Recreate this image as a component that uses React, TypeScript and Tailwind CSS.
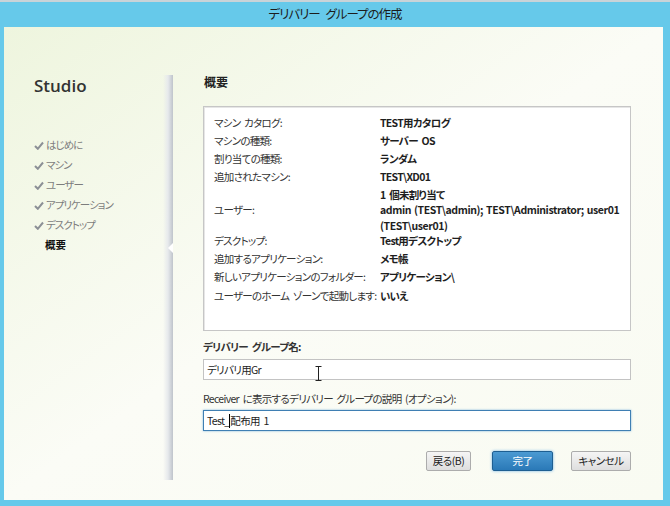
import React from "react";

const font = { fontFamily: '"Noto Sans CJK JP", "Noto Sans", sans-serif' };

function Check() {
  return (
    <svg width="10" height="9" viewBox="0 0 10 9" className="shrink-0">
      <path d="M1 5 L3.8 7.8 L9 1.5" fill="none" stroke="#8c9096" strokeWidth="2" />
    </svg>
  );
}

function Row({ label, children, className = "" }: { label: string; children: React.ReactNode; className?: string }) {
  return (
    <div className={"flex leading-[16px] whitespace-nowrap " + className}>
      <div className="w-[166px] shrink-0 text-[#333]">{label}</div>
      <div className="font-semibold text-[#1e1e1e]">{children}</div>
    </div>
  );
}

export default function App() {
  const done = ["はじめに", "マシン", "ユーザー", "アプリケーション", "デスクトップ"];
  return (
    <div className="w-[670px] h-[506px] bg-[#66c9ea] flex flex-col overflow-hidden [font-feature-settings:'palt'] [word-spacing:2px]" style={font}>
      <div className="h-[2px] bg-[#c9d3d8] shrink-0" />
      <div className="h-[25px] shrink-0 flex items-center justify-center text-[12.5px] tracking-[-1px] text-[#1c1c1c] [word-spacing:4px]">
        デリバリー グループの作成
      </div>
      <div className="flex-1 ml-[4px] mr-[7px] mb-[6px] flex bg-gradient-to-br from-[#eef5de] via-[#fbfcf6] to-[#f9fbf2]">
        {/* sidebar */}
        <div className="w-[159px] shrink-0 flex flex-col pl-[30px] pt-[48px]">
          <div className="text-[17px] font-semibold text-[#333] leading-[22px]" style={{ fontFamily: '"Open Sans", "Noto Sans", sans-serif' }}>
            Studio
          </div>
          <div className="mt-[38px] flex flex-col text-[10.5px] tracking-[-1px]">
            {done.map((t) => (
              <div key={t} className="h-[20px] flex items-center gap-[1px] text-[#7d7d7d]">
                <Check />
                <span className="ml-[1px]">{t}</span>
              </div>
            ))}
            <div className="h-[20px] flex items-center pl-[11px] font-bold text-[#111] tracking-normal">概要</div>
          </div>
        </div>
        {/* shadow divider */}
        <div className="w-[10px] shrink-0 flex flex-col">
          <div className="h-[48px]" />
          <div className="relative flex-1 mb-[20px] bg-gradient-to-r from-[#ffffff00] via-[#e6e9ec] to-[#bfc4cb]">
            <div className="absolute right-0 top-[168px] w-0 h-0 border-y-[5px] border-y-transparent border-r-[5px] border-r-white" />
          </div>
        </div>
        {/* main */}
        <div className="flex-1 min-w-0 pl-[30px] pr-[32px] pt-[47px] text-[10.5px] tracking-[-0.7px] relative">
          <div className="font-semibold text-[12px] leading-[16px] text-[#222] pl-[1px] tracking-normal">概要</div>
          <div className="mt-[16px] h-[225px] bg-white border border-[#c6c6c6] shadow-[inset_1px_1px_0_#e6e6e6] pl-[10px] pt-[8px]">
            <Row label="マシン カタログ:">TEST用カタログ</Row>
            <Row label="マシンの種類:" className="mt-[2px]">サーバー OS</Row>
            <Row label="割り当ての種類:" className="mt-[2px]">ランダム</Row>
            <Row label="追加されたマシン:" className="mt-[2px]">
              <div>TEST\XD01</div>
              <div className="mt-[2px]">1 個未割り当て</div>
            </Row>
            <Row label="ユーザー:" className="mt-[-1px]">
              <div className="tracking-[-0.4px] [word-spacing:1px]">admin (TEST\admin); TEST\Administrator; user01</div>
              <div className="tracking-[-0.4px]">(TEST\user01)</div>
            </Row>
            <Row label="デスクトップ:" className="mt-[-1px]">Test用デスクトップ</Row>
            <Row label="追加するアプリケーション:" className="mt-[2px]">メモ帳</Row>
            <Row label="新しいアプリケーションのフォルダー:" className="mt-[2px]">アプリケーション\</Row>
            <Row label="ユーザーのホーム ゾーンで起動します:" className="mt-[3px]">いいえ</Row>
          </div>
          <div className="mt-[8px] leading-[16px] font-semibold text-[#333]">デリバリー グループ名:</div>
          <div className="relative mt-[4px] h-[21px] bg-white border border-[#c3c3c3] flex items-center pl-[3px] text-[#222]">
            デリバリ用Gr
            <svg className="absolute left-[111px] top-[6px]" width="7" height="15" viewBox="0 0 7 15">
              <path d="M0.5 0.5 H6.5 M3.5 0.5 V14.5 M0.5 14.5 H6.5" stroke="#222" strokeWidth="1" fill="none" />
            </svg>
          </div>
          <div className="mt-[11px] leading-[16px] text-[#333] whitespace-nowrap">Receiver に表示するデリバリー グループの説明 (オプション):</div>
          <div className="mt-[3px] h-[21px] bg-white border border-[#3f7fb3] shadow-[0_0_2px_#7fb4dd] flex items-center pl-[3px] text-[#222] whitespace-pre">
            <span>Test_</span>
            <span className="w-px h-[14px] bg-black" />
            <span>配布用 1</span>
          </div>
          <div className="mt-[20px] flex justify-end items-center tracking-[-0.5px]">
            <button className="w-[45px] h-[20px] border border-[#acacac] rounded-[2px] bg-gradient-to-b from-[#f5f5f5] to-[#dedede] text-[#222] leading-none">
              戻る(B)
            </button>
            <button className="ml-[21px] w-[61px] h-[20px] border border-[#1e5f92] rounded-[2px] bg-gradient-to-b from-[#4b9ad2] to-[#2a79b7] text-white shadow-[0_0_3px_#6fb3e6] leading-none">
              完了
            </button>
            <button className="ml-[18px] w-[60px] h-[20px] border border-[#acacac] rounded-[2px] bg-gradient-to-b from-[#f5f5f5] to-[#dedede] text-[#222] leading-none">
              キャンセル
            </button>
          </div>
        </div>
      </div>
    </div>
  );
}
